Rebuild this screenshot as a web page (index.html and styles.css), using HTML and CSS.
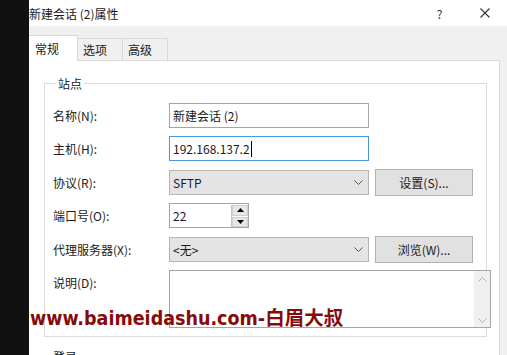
FILE: index.html
```html
<!DOCTYPE html>
<html lang="zh-CN">
<head>
    <meta charset="UTF-8">
    <meta name="viewport" content="width=device-width, initial-scale=1.0">
    <title>新建会话 (2)属性</title>
    <link rel="stylesheet" href="styles.css">
</head>
<body>
    <div class="edge"></div>

    <div class="dialog">
        <div class="titlebar">
            <span class="title">新建会话 (2)属性</span>
            <span class="title-btn help">?</span>
            <span class="title-btn close">
                <svg width="10" height="10" viewBox="0 0 10 10"><path d="M0.5 0.5 L9.5 9.5 M9.5 0.5 L0.5 9.5" stroke="#333" stroke-width="1.1" fill="none"/></svg>
            </span>
        </div>

        <div class="tabs">
            <div class="tab active">常规</div>
            <div class="tab">选项</div>
            <div class="tab">高级</div>
        </div>

        <div class="panel">
            <fieldset class="group">
                <legend>站点</legend>
                <div class="form">
                    <label>名称(N):</label>
                    <div class="field">新建会话 (2)</div>
                    <span></span>

                    <label>主机(H):</label>
                    <div class="field focus">192.168.137.2<span class="caret"></span></div>
                    <span></span>

                    <label>协议(R):</label>
                    <div class="select">SFTP
                        <svg class="chevron" width="9" height="5" viewBox="0 0 9 5"><path d="M0.5 0.5 L4.5 4.5 L8.5 0.5" stroke="#555" fill="none"/></svg>
                    </div>
                    <div class="button">设置(S)...</div>

                    <label>端口号(O):</label>
                    <div class="field port">22
                        <div class="spin">
                            <div class="spin-btn"><svg width="7" height="4" viewBox="0 0 7 4"><path d="M0 4 L3.5 0 L7 4 Z" fill="#000"/></svg></div>
                            <div class="spin-btn"><svg width="7" height="4" viewBox="0 0 7 4"><path d="M0 0 L3.5 4 L7 0 Z" fill="#000"/></svg></div>
                        </div>
                    </div>
                    <span></span>

                    <label>代理服务器(X):</label>
                    <div class="select">&lt;无&gt;
                        <svg class="chevron" width="9" height="5" viewBox="0 0 9 5"><path d="M0.5 0.5 L4.5 4.5 L8.5 0.5" stroke="#555" fill="none"/></svg>
                    </div>
                    <div class="button">浏览(W)...</div>

                    <label class="top">说明(D):</label>
                    <div class="memo">
                        <div class="scrollbar">
                            <svg width="9" height="5" viewBox="0 0 9 5"><path d="M0.5 4.5 L4.5 0.5 L8.5 4.5" stroke="#b0b0b0" fill="none"/></svg>
                            <svg width="9" height="5" viewBox="0 0 9 5"><path d="M0.5 0.5 L4.5 4.5 L8.5 0.5" stroke="#b0b0b0" fill="none"/></svg>
                        </div>
                    </div>
                </div>
            </fieldset>

            <div class="next-group">登录</div>
        </div>
    </div>

    <div class="watermark">www.baimeidashu.com-白眉大叔</div>
</body>
</html>
```

FILE: styles.css
```css
body {
    margin: 0;
    height: 100vh;
    overflow: hidden;
    display: flex;
    background-color: #f0f0f0;
    color: #1a1a1a;
    font-family: "Noto Sans CJK SC", sans-serif;
    font-size: 12px;
}

.edge {
    flex: none;
    width: 29px;
    background-color: #111;
}

.dialog {
    flex: 1;
    display: flex;
    flex-direction: column;
    min-width: 0;
}

/* 标题栏 */
.titlebar {
    flex: none;
    height: 26px;
    display: flex;
    align-items: center;
    background-color: #fff;
}

.title {
    flex: 1;
    white-space: nowrap;
}

.title-btn {
    width: 45px;
    display: flex;
    justify-content: center;
    align-items: center;
}

.help {
    font-size: 12px;
    color: #333;
}

/* 选项卡 */
.tabs {
    flex: none;
    display: flex;
    align-items: flex-start;
    padding-top: 9px;
}

.tab {
    box-sizing: border-box;
    width: 45px;
    height: 22px;
    margin-top: 3px;
    padding-left: 5px;
    display: flex;
    align-items: center;
    border: 1px solid #d9d9d9;
    border-bottom: none;
    border-left: none;
}

.tab.active {
    width: 49px;
    height: 26px;
    margin-top: 0;
    margin-bottom: -1px;
    padding-left: 6px;
    position: relative;
    z-index: 1;
    background-color: #fff;
}

.panel {
    flex: 1;
    min-width: 0;
    margin-right: 7px;
    padding: 0 12px 0 15px;
    background-color: #fff;
    border-top: 1px solid #d9d9d9;
    border-right: 1px solid #d9d9d9;
}

/* 站点分组 */
.group {
    min-width: 0;
    margin: 14px 0 0;
    padding: 11px 8px 8px;
    border: 1px solid #dcdcdc;
}

.group legend {
    margin-left: 3px;
    padding: 0 2px;
    line-height: 17px;
}

.form {
    display: grid;
    grid-template-columns: 110px 200px 98px;
    grid-template-rows: repeat(5, 25px) 58px;
    column-gap: 6px;
    row-gap: 8.4px;
    align-items: center;
}

.form label {
    white-space: nowrap;
}

.form label.top {
    align-self: start;
    padding-top: 4px;
}

.field {
    box-sizing: border-box;
    height: 25px;
    padding-left: 3px;
    display: flex;
    align-items: center;
    border: 1px solid #a5a5a5;
    background-color: #fff;
}

.field.focus {
    border-color: #4a97dd;
}

.caret {
    width: 1px;
    height: 16px;
    margin-left: 1px;
    background-color: #000;
}

.field.port {
    width: 80px;
    position: relative;
}

.spin {
    position: absolute;
    top: 1px;
    right: 0;
    bottom: 0;
    width: 16px;
    display: flex;
    flex-direction: column;
    gap: 1px;
    border-left: 1px solid #c8c8c8;
}

.spin-btn {
    flex: 1;
    display: flex;
    justify-content: center;
    align-items: center;
    background-color: #e6e6e6;
    border: 1px solid #cfcfcf;
}

.select {
    box-sizing: border-box;
    height: 25px;
    padding-left: 3px;
    display: flex;
    align-items: center;
    justify-content: space-between;
    border: 1px solid #b5b5b5;
    background-color: #e4e4e4;
}

.chevron {
    margin-right: 5px;
}

.button {
    box-sizing: border-box;
    height: 27px;
    display: flex;
    justify-content: center;
    align-items: center;
    border: 1px solid #b0b0b0;
    background-color: #e1e1e1;
}

/* 说明框比分组略宽, 右边压在分组边框上 */
.memo {
    box-sizing: border-box;
    grid-column: 2 / 4;
    height: 58px;
    margin-right: -18px;
    display: flex;
    justify-content: flex-end;
    border: 1px solid #a5a5a5;
    background-color: #fff;
    position: relative;
    z-index: 1;
}

.scrollbar {
    width: 16px;
    padding: 6px 0 4px;
    display: flex;
    flex-direction: column;
    justify-content: space-between;
    align-items: center;
    background-color: #f0f0f0;
}

.next-group {
    margin-top: 11px;
    padding-left: 9px;
    line-height: 17px;
}

/* 水印 */
.watermark {
    position: absolute;
    left: 30px;
    top: 306px;
    z-index: 2;
    white-space: nowrap;
    color: #860a0a;
    font-family: "DejaVu Sans Condensed", "DejaVu Sans", "Noto Sans CJK SC", sans-serif;
    font-stretch: condensed;
    font-weight: bold;
    font-size: 19.5px;
    line-height: 25px;
}
```
